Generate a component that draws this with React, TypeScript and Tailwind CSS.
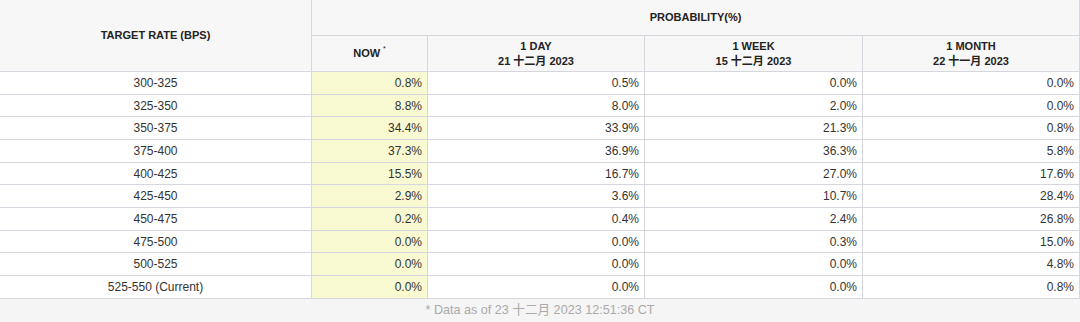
const rows: { rate: string; now: string; day: string; week: string; month: string }[] = [
  { rate: '300-325', now: '0.8%', day: '0.5%', week: '0.0%', month: '0.0%' },
  { rate: '325-350', now: '8.8%', day: '8.0%', week: '2.0%', month: '0.0%' },
  { rate: '350-375', now: '34.4%', day: '33.9%', week: '21.3%', month: '0.8%' },
  { rate: '375-400', now: '37.3%', day: '36.9%', week: '36.3%', month: '5.8%' },
  { rate: '400-425', now: '15.5%', day: '16.7%', week: '27.0%', month: '17.6%' },
  { rate: '425-450', now: '2.9%', day: '3.6%', week: '10.7%', month: '28.4%' },
  { rate: '450-475', now: '0.2%', day: '0.4%', week: '2.4%', month: '26.8%' },
  { rate: '475-500', now: '0.0%', day: '0.0%', week: '0.3%', month: '15.0%' },
  { rate: '500-525', now: '0.0%', day: '0.0%', week: '0.0%', month: '4.8%' },
  { rate: '525-550 (Current)', now: '0.0%', day: '0.0%', week: '0.0%', month: '0.8%' },
];

// rows in the source are ~22.7px tall, so alternate 23/22
const rowHeights = ['h-[23px]', 'h-[22px]', 'h-[23px]', 'h-[23px]', 'h-[22px]', 'h-[23px]', 'h-[23px]', 'h-[22px]', 'h-[23px]', 'h-[23px]'];

const font = "font-['Liberation_Sans','Noto_Sans_CJK_SC',Arial,sans-serif]";
const cell = 'border-r border-b border-[#d6d6de]';

export default function App() {
  return (
    <div className={`w-[1080px] h-[322px] bg-white text-[12px] text-[#333] ${font}`}>
      <div className="grid grid-cols-[312px_116px_217px_218px_217px] grid-rows-[36px_36px]">
        <div className={`${cell} row-span-2 bg-[#f7f7f7] flex items-center justify-center font-bold text-[11px] text-[#222]`}>
          TARGET RATE (BPS)
        </div>
        <div className={`${cell} col-span-4 bg-[#f7f7f7] flex items-center justify-center font-bold text-[11px] text-[#222]`}>
          PROBABILITY(%)
        </div>
        <div className={`${cell} bg-[#f7f7f7] flex items-center justify-center font-bold text-[11px] text-[#222]`}>
          NOW<sup className="text-[7px] font-normal ml-[3px] -top-[5px]">*</sup>
        </div>
        <HeaderCell title="1 DAY" date="21 十二月 2023" />
        <HeaderCell title="1 WEEK" date="15 十二月 2023" />
        <HeaderCell title="1 MONTH" date="22 十一月 2023" />
      </div>

      {rows.map((r, i) => (
        <div key={r.rate} className={`grid grid-cols-[312px_116px_217px_218px_217px] ${rowHeights[i]}`}>
          <div className={`${cell} flex items-center justify-center`}>{r.rate}</div>
          <div className={`${cell} bg-[#fafad2] flex items-center justify-end pr-[5px]`}>{r.now}</div>
          <div className={`${cell} flex items-center justify-end pr-[5px]`}>{r.day}</div>
          <div className={`${cell} flex items-center justify-end pr-[5px]`}>{r.week}</div>
          <div className={`${cell} flex items-center justify-end pr-[5px]`}>{r.month}</div>
        </div>
      ))}

      <div className="h-[23px] bg-[#f5f5f5] flex items-center justify-center text-[12.6px] text-[#aaa]">
        * Data as of 23 十二月 2023 12:51:36 CT
      </div>
    </div>
  );
}

function HeaderCell({ title, date }: { title: string; date: string }) {
  return (
    <div className={`${cell} bg-[#f7f7f7] flex flex-col items-center justify-center font-bold text-[11px] leading-[15px] text-[#222]`}>
      <span>{title}</span>
      <span>{date}</span>
    </div>
  );
}
